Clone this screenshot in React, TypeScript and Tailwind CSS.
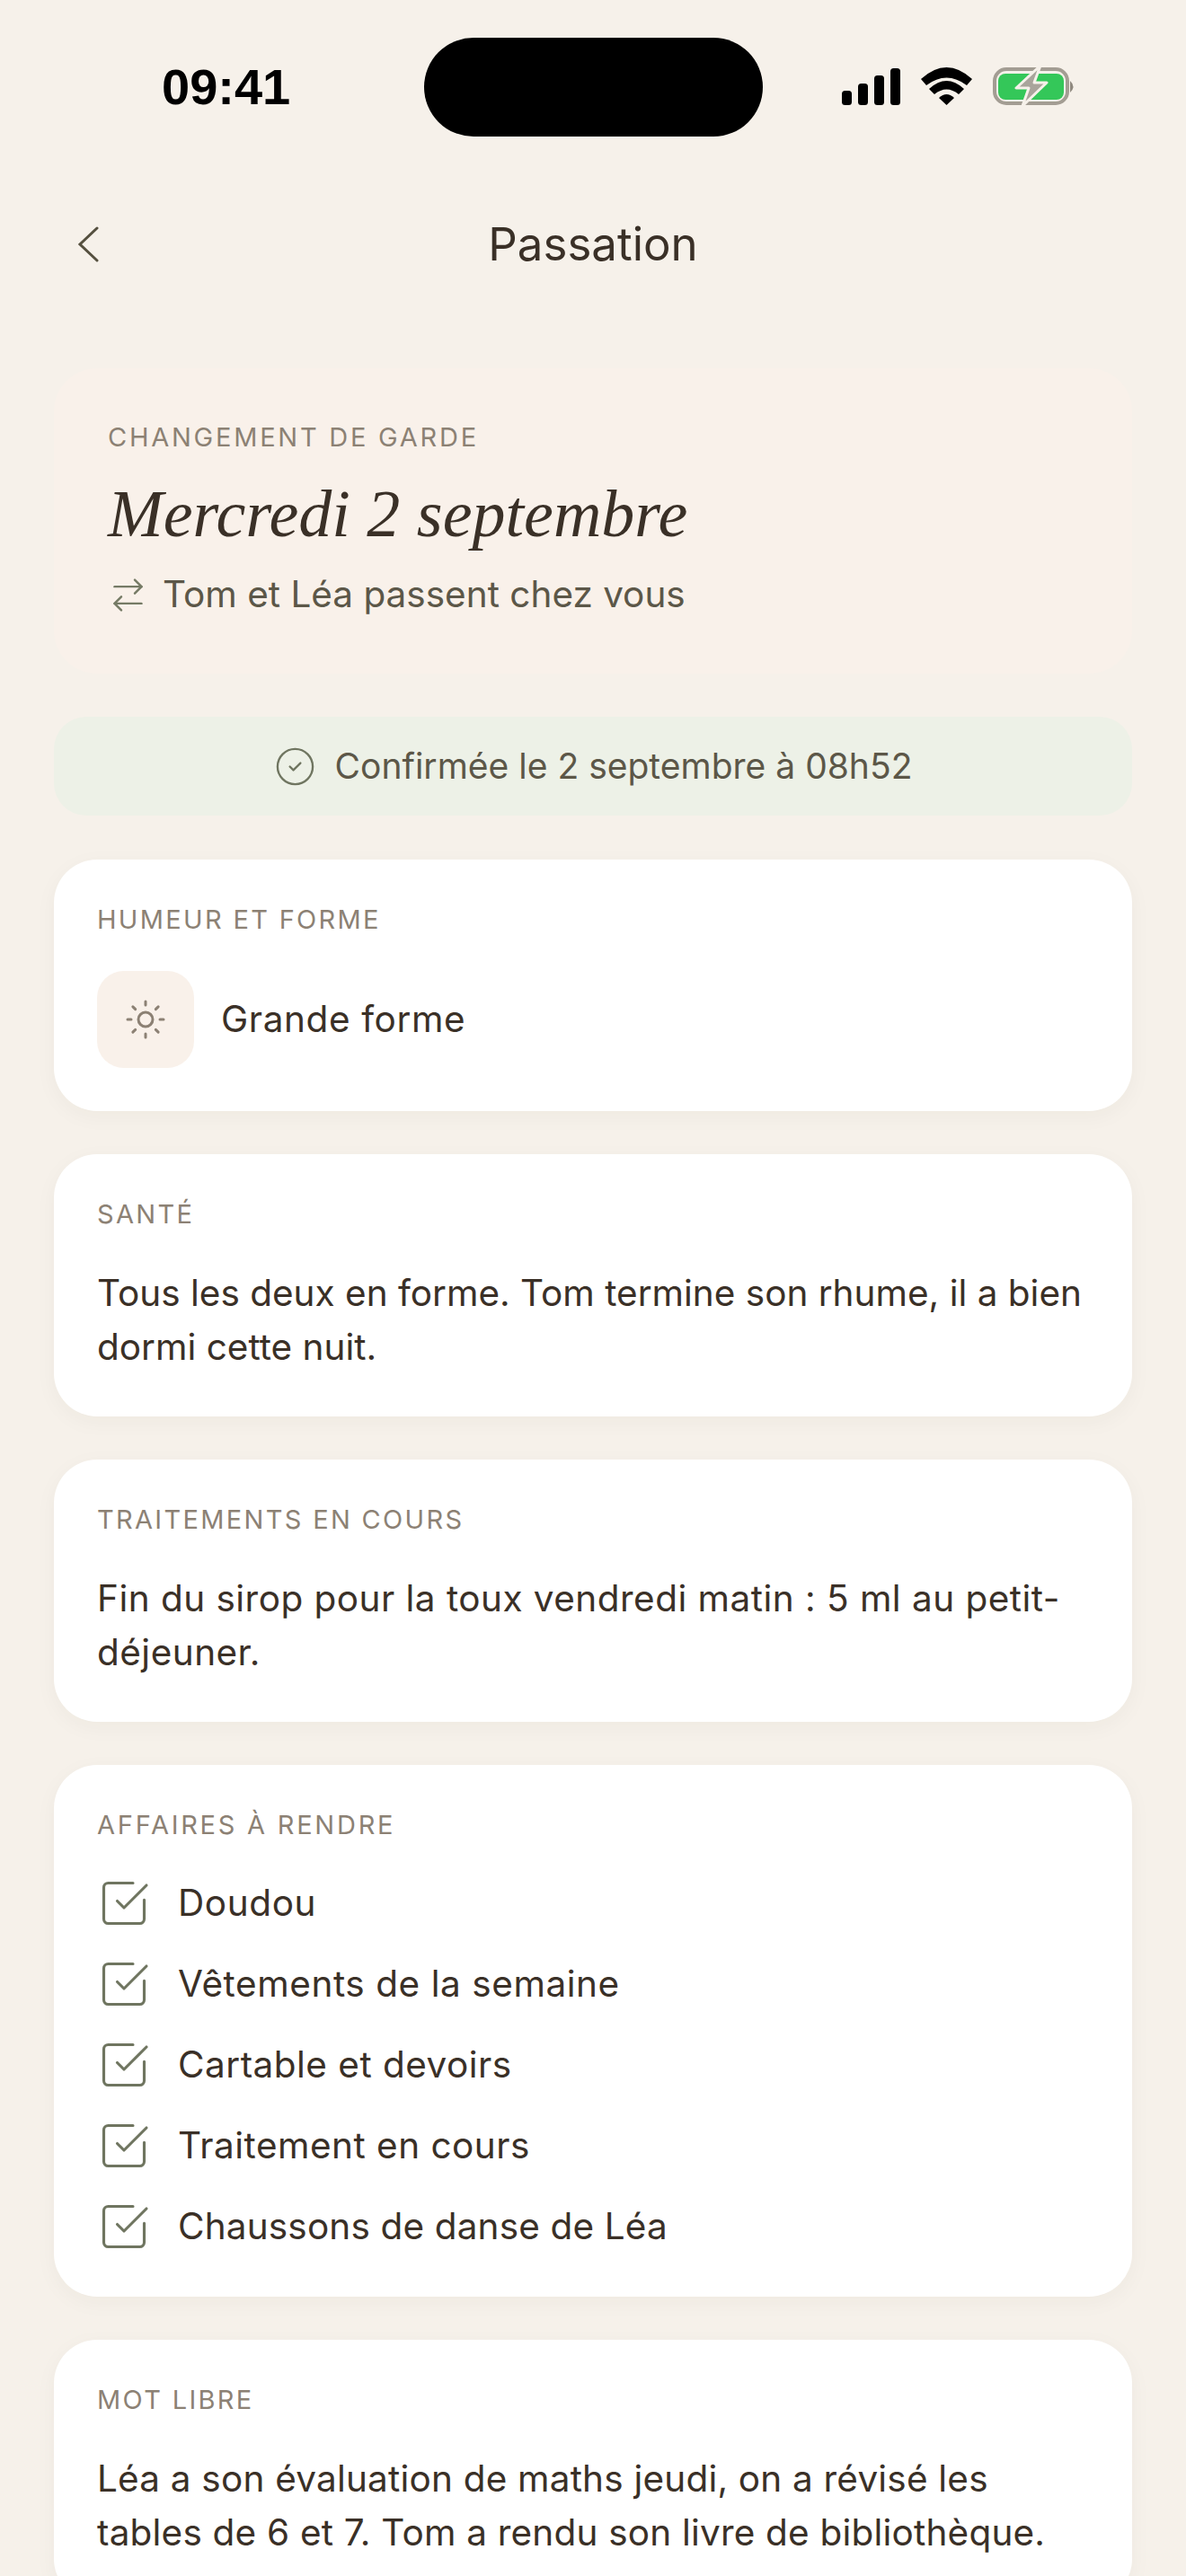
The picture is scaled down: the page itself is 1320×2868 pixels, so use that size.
import React from "react";

const sans = "font-['Inter','Liberation_Sans',sans-serif]";

function Label({ children, wide = false }: { children: React.ReactNode; wide?: boolean }) {
  return (
    <div className={"text-[29px] leading-[40px] text-[#8c8174] font-normal " + (wide ? "tracking-[0.095em]" : "tracking-[0.08em]")}>
      {children}
    </div>
  );
}

function Card({ children, className = "" }: { children: React.ReactNode; className?: string }) {
  return (
    <section className={"rounded-[48px] bg-white px-[48px] pt-[47px] pb-[47px] shadow-[0_6px_24px_rgba(60,45,30,0.04)] " + className}>
      {children}
    </section>
  );
}

function Check() {
  return (
    <svg width="60" height="60" viewBox="0 0 24 24" fill="none" stroke="#6f7560" strokeWidth="1.25" strokeLinecap="round" strokeLinejoin="round" className="shrink-0">
      <path d="M21 10.5V19a2 2 0 0 1-2 2H5a2 2 0 0 1-2-2V5a2 2 0 0 1 2-2h11" />
      <path d="m9 11 3 3L22 4" />
    </svg>
  );
}

const items = [
  { t: "Doudou", c: "tracking-[0.6px]" },
  { t: "Vêtements de la semaine", c: "tracking-[0.56px]" },
  { t: "Cartable et devoirs", c: "tracking-[0.48px]" },
  { t: "Traitement en cours", c: "tracking-[0.48px]" },
  { t: "Chaussons de danse de Léa", c: "tracking-[0.15px]" },
];

export default function App() {
  return (
    <div className={"relative h-[2868px] w-[1320px] overflow-hidden bg-[#f6f1ea] text-[#3a3027] " + sans}>
      <div className="relative flex h-[236px] items-start justify-between pl-[180px] pr-[118px] pt-[72px]">
        <div className="mt-[-3px] font-['Liberation_Sans',sans-serif] text-[56px] font-bold leading-[56px] text-black">09:41</div>
        <div className="absolute left-[472px] top-[42px] h-[110px] w-[377px] rounded-[56px] bg-black" />
        <svg width="265" height="50" viewBox="0 0 265 50">
          <rect x="0" y="29" width="11" height="16" rx="3.5" />
          <rect x="18" y="21" width="11" height="24" rx="3.5" />
          <rect x="36" y="12" width="11" height="33" rx="3.5" />
          <rect x="54" y="4" width="11" height="41" rx="3.5" />
          <path d="M88 16 Q116.5 -10 145 16 L139 23 Q116.5 6 94 23Z" />
          <path d="M97 27 Q116.5 9 136 27 L130 33 Q116.5 22 103 33Z" />
          <path d="M108 37 Q116.5 29 125 37 L116.5 45Z" />
          <rect x="170" y="5" width="81" height="38" rx="13" fill="none" stroke="#a39d93" strokeWidth="4" />
          <rect x="174" y="10" width="73" height="29" rx="8" fill="#34c759" />
          <path d="M254 18 q7 6.5 0 13z" fill="#8f897f" />
          <path d="M221 1 L194 26 H208 L201 46 L228 20 H214 Z" fill="#a9a49b" stroke="#f6f1ea" strokeWidth="3" strokeLinejoin="round" />
        </svg>
      </div>

      <header className="relative flex h-[72px] items-center justify-center">
        <svg width="36" height="48" viewBox="0 0 36 48" fill="none" stroke="#55503f" strokeWidth="3" strokeLinecap="round" className="absolute left-[81px] top-[12px]">
          <path d="M27 6 L8 24 L27 42" />
        </svg>
        <h1 className="text-[51px] font-normal leading-[72px] text-[#3a3027]">Passation</h1>
      </header>

      <div className="mx-[60px] mt-[102px] h-[340px] rounded-[48px] bg-[#f9f1ea] px-[60px] pt-[57px]">
        <Label wide>CHANGEMENT DE GARDE</Label>
        <div className="mt-[23px] font-['Liberation_Serif',serif] text-[74px] italic leading-[84px] text-[#3a3027]">Mercredi 2 septembre</div>
        <div className="mt-[20px] flex items-center gap-[16px] text-[40.5px] leading-[56px] text-[#5c5748]">
          <svg width="45" height="45" viewBox="0 0 24 24" fill="none" stroke="#757a65" strokeWidth="1.3" strokeLinecap="round" strokeLinejoin="round">
            <path d="m16 3 4 4-4 4" /><path d="M20 7H4" /><path d="m8 21-4-4 4-4" /><path d="M4 17h16" />
          </svg>
          <span>Tom et Léa passent chez vous</span>
        </div>
      </div>

      <div className="mx-[60px] mt-[48px] flex h-[110px] items-center justify-center gap-[21px] rounded-[36px] bg-[#edf1e7] text-[39px] text-[#5c5748]">
        <svg width="47" height="47" viewBox="0 0 24 24" fill="none" stroke="#6f7560" strokeWidth="1.2" strokeLinecap="round" strokeLinejoin="round">
          <circle cx="12" cy="12" r="10" /><path d="m9 12 2 2 4-4" />
        </svg>
        <span>Confirmée le 2 septembre à 08h52</span>
      </div>

      <div className="mx-[60px] mt-[49px] flex flex-col gap-[48px] text-[40.5px] leading-[60px] text-[#3a3027]">
        <Card className="!pb-[48px]">
          <Label>HUMEUR ET FORME</Label>
          <div className="mt-[37px] flex items-center gap-[30px]">
            <div className="flex h-[108px] w-[108px] items-center justify-center rounded-[30px] bg-[#f9f1ea]">
              <svg width="48" height="48" viewBox="0 0 24 24" fill="none" stroke="#8c8174" strokeWidth="1.5" strokeLinecap="round">
                <circle cx="12" cy="12" r="4" />
                <path d="M12 2v2M12 20v2M4.93 4.93l1.41 1.41M17.66 17.66l1.41 1.41M2 12h2M20 12h2M6.34 17.66l-1.41 1.41M19.07 4.93l-1.41 1.41" />
              </svg>
            </div>
            <span className="tracking-[0.6px]">Grande forme</span>
          </div>
        </Card>
        <Card>
          <Label>SANTÉ</Label>
          <p className="mt-[38px]">Tous les deux en forme. Tom termine son rhume, il a bien dormi cette nuit.</p>
        </Card>
        <Card>
          <Label>TRAITEMENTS EN COURS</Label>
          <p className="mt-[38px] tracking-[0.47px]">Fin du sirop pour la toux vendredi matin : 5 ml au petit-déjeuner.</p>
        </Card>
        <Card className="h-[592px]">
          <Label wide>AFFAIRES À RENDRE</Label>
          <ul className="mt-[37px] flex flex-col gap-[30px]">
            {items.map(({ t, c }) => (
              <li key={t} className="flex items-center gap-[30px]">
                <Check />
                <span className={c}>{t}</span>
              </li>
            ))}
          </ul>
        </Card>
        <Card>
          <Label>MOT LIBRE</Label>
          <p className="mt-[38px] tracking-[0.2px]">Léa a son évaluation de maths jeudi, on a révisé les tables de 6 et 7. Tom a rendu son livre de bibliothèque.</p>
        </Card>
      </div>
    </div>
  );
}
